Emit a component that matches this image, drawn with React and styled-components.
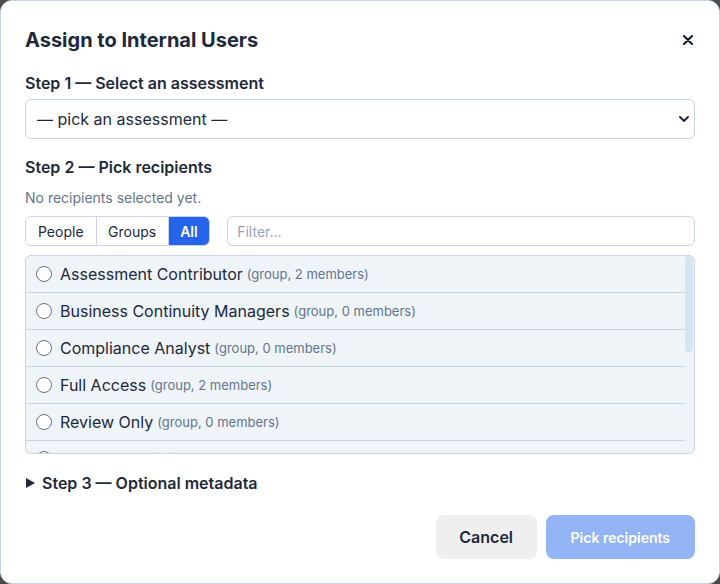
import React from "react";
import styled, { createGlobalStyle } from "styled-components";

const Global = createGlobalStyle`
  html, body { margin: 0; padding: 0; }
  body {
    background: #4a4a4a;
    font-family: Inter, "Noto Sans", sans-serif;
    color: #1e293b;
  }
  * { box-sizing: border-box; }
`;

const Dialog = styled.div`
  width: 720px;
  height: 584px;
  background: #ffffff;
  border: 1px solid #c6d4e5;
  border-radius: 12px;
  padding: 24px 24px 0 24px;
  display: flex;
  flex-direction: column;
`;

const Header = styled.div`
  display: flex;
  align-items: center;
  justify-content: space-between;
  height: 30px;
`;

const Title = styled.h2`
  margin: 0;
  font-size: 20px;
  font-weight: 700;
  line-height: 30px;
  color: #1e293b;
`;

const CloseButton = styled.button`
  border: 0;
  background: transparent;
  padding: 0;
  width: 20px;
  height: 20px;
  display: flex;
  align-items: center;
  justify-content: center;
  margin-right: -3px;
  cursor: pointer;
`;

const StepLabel = styled.div`
  margin-top: ${(p) => p.$mt}px;
  font-size: 16px;
  font-weight: 600;
  line-height: 20px;
  color: #1e293b;
`;

const SelectBox = styled.div`
  margin-top: 6px;
  height: 40px;
  border: 1px solid #c6d4e5;
  border-radius: 6px;
  display: flex;
  align-items: center;
  justify-content: space-between;
  padding: 0 4px 0 11px;
  font-size: 16px;
  color: #1e293b;
`;

const Hint = styled.div`
  margin-top: 11px;
  font-size: 14px;
  line-height: 20px;
  color: #64748b;
`;

const Controls = styled.div`
  margin-top: 8px;
  display: flex;
  gap: 17px;
  height: 30px;
`;

const Segmented = styled.div`
  display: flex;
  border: 1px solid #c6d4e5;
  border-radius: 6px;
  overflow: hidden;
`;

const Segment = styled.button`
  border: 0;
  border-left: ${(p) => (p.$first ? "0" : "1px solid #c6d4e5")};
  background: ${(p) => (p.$active ? "#2563eb" : "#ffffff")};
  color: ${(p) => (p.$active ? "#ffffff" : "#1e293b")};
  font-family: inherit;
  font-size: 14px;
  font-weight: ${(p) => (p.$active ? 600 : 400)};
  padding: 0 ${(p) => (p.$tight ? 11.5 : 12)}px;
  height: 100%;
`;

const FilterInput = styled.input`
  flex: 1;
  border: 1px solid #c6d4e5;
  border-radius: 6px;
  font-family: inherit;
  font-size: 14px;
  padding: 0 9px;
  color: #1e293b;
  &::placeholder { color: #9aa5b4; }
`;

const List = styled.div`
  margin-top: 9px;
  height: 199px;
  border: 1px solid #c6d4e5;
  border-radius: 6px;
  background: #eff4f9;
  overflow: hidden;
  display: flex;
`;

const Rows = styled.div`
  flex: 1;
  min-width: 0;
  overflow: hidden;
`;

const ScrollTrack = styled.div`
  width: 9px;
  flex-shrink: 0;
`;

const ScrollThumb = styled.div`
  width: 8px;
  height: 96px;
  border-radius: 4px;
  background: #d5e3f3;
`;

const Row = styled.label`
  display: flex;
  align-items: center;
  height: 37px;
  padding: 0 10px;
  border-bottom: 1px solid #c6d4e5;
  font-size: 16px;
  color: #1e293b;
  white-space: nowrap;
`;

const Radio = styled.span`
  width: 16px;
  height: 16px;
  border: 1px solid #6b7280;
  border-radius: 50%;
  background: #ffffff;
  flex-shrink: 0;
  margin-right: 8px;
`;

const Meta = styled.span`
  margin-left: 4px;
  font-size: 13px;
  color: #64748b;
`;

const Disclosure = styled.div`
  margin-top: 19px;
  display: flex;
  align-items: center;
  gap: 7px;
  font-size: 16px;
  font-weight: 600;
  line-height: 20px;
  color: #1e293b;
`;

const Triangle = styled.span`
  width: 0;
  height: 0;
  border-top: 5px solid transparent;
  border-bottom: 5px solid transparent;
  border-left: 9px solid #1e293b;
  margin-left: 1px;
`;

const Footer = styled.div`
  margin-top: 22px;
  display: flex;
  justify-content: flex-end;
  gap: 9px;
`;

const Button = styled.button`
  height: 44px;
  border: 0;
  border-radius: 8px;
  font-family: inherit;
  font-weight: 600;
  padding: 0 ${(p) => (p.$primary ? 25 : 23.5)}px;
  font-size: ${(p) => (p.$primary ? 14 : 16)}px;
  background: ${(p) => (p.$primary ? "#93b4f5" : "#efefef")};
  color: ${(p) => (p.$primary ? "#ffffff" : "#1e293b")};
`;

const rows = [
  ["Assessment Contributor", "(group, 2 members)"],
  ["Business Continuity Managers", "(group, 0 members)"],
  ["Compliance Analyst", "(group, 0 members)"],
  ["Full Access", "(group, 2 members)"],
  ["Review Only", "(group, 0 members)"],
  ["System Administrators", "(group, 1 member)"],
  ["Vendor Managers", "(group, 3 members)"],
];

export default function App() {
  return (
    <>
      <Global />
      <Dialog>
        <Header>
          <Title>Assign to Internal Users</Title>
          <CloseButton aria-label="Close">
            <svg width="10" height="10" viewBox="0 0 10 10">
              <path d="M1 1L9 9M9 1L1 9" stroke="#111827" strokeWidth="2" strokeLinecap="round" />
            </svg>
          </CloseButton>
        </Header>
        <StepLabel $mt={18}>Step 1 — Select an assessment</StepLabel>
        <SelectBox>
          <span>— pick an assessment —</span>
          <svg width="12" height="8" viewBox="0 0 12 8">
            <path d="M2 2L6 6L10 2" stroke="#1e293b" strokeWidth="2" fill="none" strokeLinecap="round" strokeLinejoin="round" />
          </svg>
        </SelectBox>
        <StepLabel $mt={18}>Step 2 — Pick recipients</StepLabel>
        <Hint>No recipients selected yet.</Hint>
        <Controls>
          <Segmented>
            <Segment $first>People</Segment>
            <Segment $tight>Groups</Segment>
            <Segment $active $tight>All</Segment>
          </Segmented>
          <FilterInput placeholder="Filter..." />
        </Controls>
        <List>
          <Rows>
            {rows.map(([name, meta]) => (
              <Row key={name}>
                <Radio />
                {name}
                <Meta>{meta}</Meta>
              </Row>
            ))}
          </Rows>
          <ScrollTrack>
            <ScrollThumb />
          </ScrollTrack>
        </List>
        <Disclosure>
          <Triangle />
          Step 3 — Optional metadata
        </Disclosure>
        <Footer>
          <Button>Cancel</Button>
          <Button $primary>Pick recipients</Button>
        </Footer>
      </Dialog>
    </>
  );
}
